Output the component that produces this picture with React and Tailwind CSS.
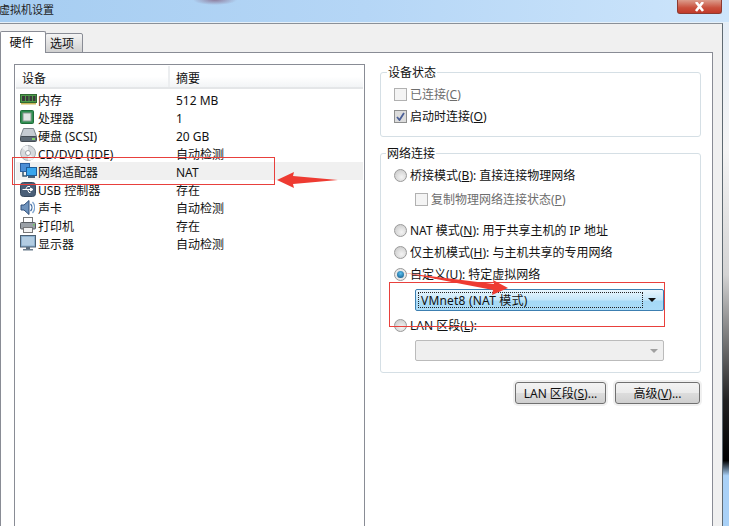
const Ram = () => (
  <svg width="17" height="12" viewBox="0 0 17 12">
    <rect x="0.5" y="1.5" width="16" height="8" fill="#4f9a4a" stroke="#2f6b32" />
    <rect x="2" y="3" width="3" height="5" fill="#3b3b3b" />
    <rect x="6" y="3" width="2.5" height="5" fill="#3b3b3b" />
    <rect x="9.5" y="3" width="2.5" height="5" fill="#3b3b3b" />
    <rect x="13" y="3" width="2.5" height="5" fill="#3b3b3b" />
    <rect x="1" y="10" width="15" height="1.5" fill="#c9b45a" />
  </svg>
);
const Cpu = () => (
  <svg width="14" height="14" viewBox="0 0 14 14">
    <rect x="0.5" y="0.5" width="13" height="13" rx="1" fill="#2f8f50" stroke="#1f6b3a" />
    <rect x="3" y="3" width="8" height="8" fill="#dfe5e3" stroke="#8a9a92" />
  </svg>
);
const Disk = () => (
  <svg width="17" height="14" viewBox="0 0 17 14">
    <path d="M3.5 0.5H13.5L16.5 8.5H0.5Z" fill="#c6ccd2" stroke="#7d858c" />
    <rect x="0.5" y="8.5" width="16" height="5" rx="1" fill="#5f6b76" stroke="#444c54" />
    <rect x="12" y="10" width="3" height="2" fill="#7fd06a" />
  </svg>
);
const Cd = () => (
  <svg width="16" height="16" viewBox="0 0 16 16">
    <circle cx="8" cy="8" r="7.5" fill="#d6d9dc" stroke="#a8adb2" />
    <path d="M8 8L2 3A7.5 7.5 0 0 1 8 .5Z" fill="#f2f4f6" />
    <path d="M8 8L14 13A7.5 7.5 0 0 1 8 15.5Z" fill="#f0f2f4" />
    <circle cx="8" cy="8" r="2.5" fill="#fff" stroke="#9aa0a6" />
  </svg>
);
const Net = () => (
  <svg width="17" height="16" viewBox="0 0 17 16">
    <rect x="0.5" y="0.5" width="9" height="8" fill="#4d8fd6" stroke="#2a5f9e" />
    <path d="M3 9V13H7" fill="none" stroke="#33566f" strokeWidth="1.5" />
    <rect x="6.5" y="4.5" width="10" height="8" fill="#38a6ee" stroke="#1f5c96" />
    <rect x="8" y="13" width="7" height="2" fill="#47627a" />
  </svg>
);
const Usb = () => (
  <svg width="16" height="15" viewBox="0 0 16 15">
    <rect x="0.5" y="0.5" width="15" height="14" rx="3" fill="#4a5f78" stroke="#37485c" />
    <path d="M2.5 7.5H13M13 7.5L10.5 6V9ZM5.5 7.5L7.5 4.5H10M7.5 7.5L9 10.5H10.5" fill="none" stroke="#fff" strokeWidth="1" />
  </svg>
);
const Speaker = () => (
  <svg width="15" height="17" viewBox="0 0 15 17">
    <path d="M1 6H4L9 1.5V15.5L4 11H1Z" fill="#6f93bd" stroke="#2f4f7a" />
    <path d="M10.5 5A5 5 0 0 1 10.5 12" fill="none" stroke="#3f6aa0" strokeWidth="1.3" />
    <path d="M12.5 3A8 8 0 0 1 12.5 14" fill="none" stroke="#7fa5cf" strokeWidth="1.3" />
  </svg>
);
const Printer = () => (
  <svg width="16" height="16" viewBox="0 0 16 16">
    <rect x="3.5" y="0.5" width="9" height="6" fill="#fff" stroke="#777" />
    <rect x="0.5" y="5.5" width="15" height="6.5" rx="1" fill="#9aa0a6" stroke="#5a5f64" />
    <rect x="13" y="7" width="1.5" height="1.5" fill="#6fd05a" />
    <rect x="3.5" y="10.5" width="9" height="5" fill="#f4f4f4" stroke="#777" />
  </svg>
);
const Monitor = () => (
  <svg width="16" height="16" viewBox="0 0 16 16">
    <rect x="0.5" y="0.5" width="15" height="11.5" fill="#8cb0cf" stroke="#4c5f70" />
    <rect x="2" y="2" width="12" height="8.5" fill="#b3cde2" />
    <rect x="6" y="12" width="4" height="2" fill="#5d6e7d" />
    <rect x="3" y="14" width="10" height="1.5" fill="#6d7e8d" />
  </svg>
);

const rows = [
  [Ram, "内存", "512 MB"],
  [Cpu, "处理器", "1"],
  [Disk, "硬盘 (SCSI)", "20 GB"],
  [Cd, "CD/DVD (IDE)", "自动检测"],
  [Net, "网络适配器", "NAT"],
  [Usb, "USB 控制器", "存在"],
  [Speaker, "声卡", "自动检测"],
  [Printer, "打印机", "存在"],
  [Monitor, "显示器", "自动检测"],
];

const Check = ({ checked }) => (
  <span className={`w-[13px] h-[13px] shrink-0 border flex items-center justify-center ${checked ? "border-[#8e8f8f] bg-[#dcdcdc]" : "border-[#b1b1b1] bg-[#f4f4f4]"}`}>
    {checked && (
      <svg width="9" height="9" viewBox="0 0 9 9">
        <path d="M1 5L3.5 8L8 1" fill="none" stroke="#4a5f97" strokeWidth="1.8" />
      </svg>
    )}
  </span>
);

const Radio = ({ on }) => (
  <span className={`w-[13px] h-[13px] shrink-0 rounded-full border border-[#9a9a9a] flex items-center justify-center ${on ? "bg-[#e8e8e8]" : "bg-[radial-gradient(circle_at_60%_65%,#f4f4f4,#c4c4c4)]"}`}>
    {on && <span className="w-[7px] h-[7px] rounded-full bg-[radial-gradient(circle_at_50%_35%,#5cc0f0,#0b4f80)]" />}
  </span>
);

const U = ({ children }) => <span className="underline">{children}</span>;

const Row = ({ children, className = "" }) => (
  <div className={`h-[22px] flex items-center gap-[3px] pl-[13px] ${className}`}>{children}</div>
);

const Label = ({ children }) => <span className="pt-[2px]">{children}</span>;

export default function App() {
  return (
    <div className="relative w-[729px] h-[526px] overflow-hidden flex flex-col bg-[#f0f0f0] text-[12px] leading-[16px] text-[#111] font-['Noto_Sans','Noto_Sans_CJK_SC',sans-serif]">
      <div className="h-[23px] shrink-0 flex justify-between border-b border-[#e6f0f8] bg-[radial-gradient(ellipse_22px_5px_at_215px_0px,#8f7f9f,transparent),linear-gradient(90deg,#a6cdf1,#b5d6f6_50%,#cde5fb)]">
        <span className="text-[11px] leading-[20px] -ml-px text-[#222]">虚拟机设置</span>
        <div className="w-[45px] h-[14px] mr-[7px] rounded-b-[3px] border border-t-0 border-[#8c3a30] bg-[linear-gradient(#dc9c8c,#c9503d_60%,#c23a2a)] flex items-center justify-center">
          <svg width="11" height="10" viewBox="0 0 11 10">
            <path d="M2 0L9 9M9 0L2 9" fill="none" stroke="#fff" strokeWidth="2.6" />
          </svg>
        </div>
      </div>

      <div className="flex-1 min-h-0 flex">
        <div className="w-[723px] shrink-0 border-r border-[#5f6a72] border-t border-t-[#8a9098] flex flex-col">
          <div className="h-[29px] shrink-0 flex items-end relative z-10 -mb-px">
            <div className="w-[46px] h-[22px] border border-b-0 border-[#898c95] rounded-t-[2px] bg-white flex items-center justify-center pr-[3px] text-[12px] leading-[18px]">硬件</div>
            <div className="w-[38px] h-[20px] -ml-px border border-[#898c95] rounded-t-[2px] bg-[linear-gradient(#f4f4f4,#d0d0d0)] flex items-center justify-center pr-[4px] pt-[2px]">选项</div>
          </div>

          <div className="flex-1 min-h-0 w-[713px] border border-[#898c95] border-b-0 bg-white pt-[11px] pl-[13px] flex gap-[15px]">
            <div className="w-[351px] shrink-0 border border-[#898c95] border-b-0 pt-px pl-px pr-px">
              <div className="h-[23px] flex border-b-2 border-[#e4e6e8] bg-[linear-gradient(#ffffff_50%,#f2f4f6)]">
                <span className="w-[154px] pl-[6px] pt-[5px] border-r-2 border-[#eceef0]">设备</span>
                <span className="pl-[6px] pt-[5px]">摘要</span>
              </div>
              <div className="pt-[1px]">
                {rows.map(([Icon, name, summary], i) => (
                  <div key={name} className={`h-[18px] flex items-center ${i === 4 ? "bg-[#f0f0f0]" : ""}`}>
                    <span className="w-[22px] shrink-0 pl-[4px] flex items-center justify-start">
                      <Icon />
                    </span>
                    <span className="w-[138px] shrink-0 whitespace-nowrap pt-[4px]">{name}</span>
                    <span className="pt-[4px]">{summary}</span>
                  </div>
                ))}
              </div>
            </div>

            <div className="w-[321px] shrink-0 flex flex-col">
              <fieldset className="border border-[#d5dfe5] rounded-[3px] h-[73px]">
                <legend className="ml-[6px] px-px"><span className="relative top-px">设备状态</span></legend>
                <div className="pt-[3px]">
                  <Row className="text-[#6d6d6d]">
                    <Check />
                    <Label>已连接(<U>C</U>)</Label>
                  </Row>
                  <Row>
                    <Check checked />
                    <Label>启动时连接(<U>O</U>)</Label>
                  </Row>
                </div>
              </fieldset>

              <fieldset className="mt-[8px] border border-[#d5dfe5] rounded-[3px] h-[228px]">
                <legend className="ml-[5px] px-px"><span className="relative top-px">网络连接</span></legend>
                <div className="pt-[3px]">
                  <Row>
                    <Radio />
                    <Label>桥接模式(<U>B</U>): 直接连接物理网络</Label>
                  </Row>
                  <Row className="mt-[2px] !pl-[34px] text-[#6d6d6d]">
                    <Check />
                    <Label>复制物理网络连接状态(<U>P</U>)</Label>
                  </Row>
                  <Row className="mt-[9px]">
                    <Radio />
                    <Label>NAT 模式(<U>N</U>): 用于共享主机的 IP 地址</Label>
                  </Row>
                  <Row>
                    <Radio />
                    <Label>仅主机模式(<U>H</U>): 与主机共享的专用网络</Label>
                  </Row>
                  <Row>
                    <Radio on />
                    <Label>自定义(<U>U</U>): 特定虚拟网络</Label>
                  </Row>
                  <div className="ml-[34px] mt-[4px] w-[249px] h-[22px] rounded-[2px] border border-[#3c7fb1] bg-[linear-gradient(#e9f5fd_0%,#c4e6fa_50%,#a5d9f6_55%,#aadcf8)] flex items-center p-[2px]">
                    <div className="flex-1 h-full border border-dotted border-[#222] flex items-center pl-[2px] pt-[2px] tracking-[0.2px]">VMnet8 (NAT 模式)</div>
                    <div className="w-[18px] flex justify-center">
                      <svg width="8" height="4" viewBox="0 0 8 4">
                        <path d="M0 0H8L4 4Z" fill="#111" />
                      </svg>
                    </div>
                  </div>
                  <Row className="mt-[3px]">
                    <Radio />
                    <Label>LAN 区段(<U>L</U>):</Label>
                  </Row>
                  <div className="ml-[34px] mt-[4px] w-[249px] h-[21px] rounded-[2px] border border-[#bbbbbb] bg-[#efefef] flex items-center justify-end pr-[5px]">
                    <svg width="8" height="4" viewBox="0 0 8 4">
                      <path d="M0 0H8L4 4Z" fill="#a0a0a0" />
                    </svg>
                  </div>
                </div>
              </fieldset>

              <div className="mt-[9px] pr-px flex justify-end gap-[9px]">
                <button className="w-[91px] h-[22px] pt-[2px] rounded-[3px] border border-[#707070] ring-2 ring-[#f0f0f0] bg-[linear-gradient(#f3f3f3,#ebebeb_48%,#dddddd_50%,#cfcfcf)] flex items-center justify-center">LAN 区段(<U>S</U>)...</button>
                <button className="w-[85px] h-[22px] pt-[2px] rounded-[3px] border border-[#707070] ring-2 ring-[#f0f0f0] bg-[linear-gradient(#f3f3f3,#ebebeb_48%,#dddddd_50%,#cfcfcf)] flex items-center justify-center">高级(<U>V</U>)...</button>
              </div>
            </div>
          </div>
        </div>
        <div className="flex-1 bg-[linear-gradient(#e4edf6_0%,#f4f4f4_25%,#d4d4d4_50%,#222_75%,#000_87%,#a9d1f7_90%,#a9d1f7_100%)]" />
      </div>

      <svg className="absolute inset-0 pointer-events-none" width="729" height="526" viewBox="0 0 729 526">
        <rect x="12.5" y="157.5" width="262" height="27" fill="none" stroke="#e8403c" />
        <rect x="389.5" y="282.5" width="275" height="44" fill="none" stroke="#e8403c" />
        <polygon points="277,180 294,172 293,176 338,180 293,184 294,188" fill="#ee3b32" />
        <polygon points="405,273 494,284 493,280 508,288 492,295 493,290" fill="#ee3b32" />
      </svg>
    </div>
  );
}
